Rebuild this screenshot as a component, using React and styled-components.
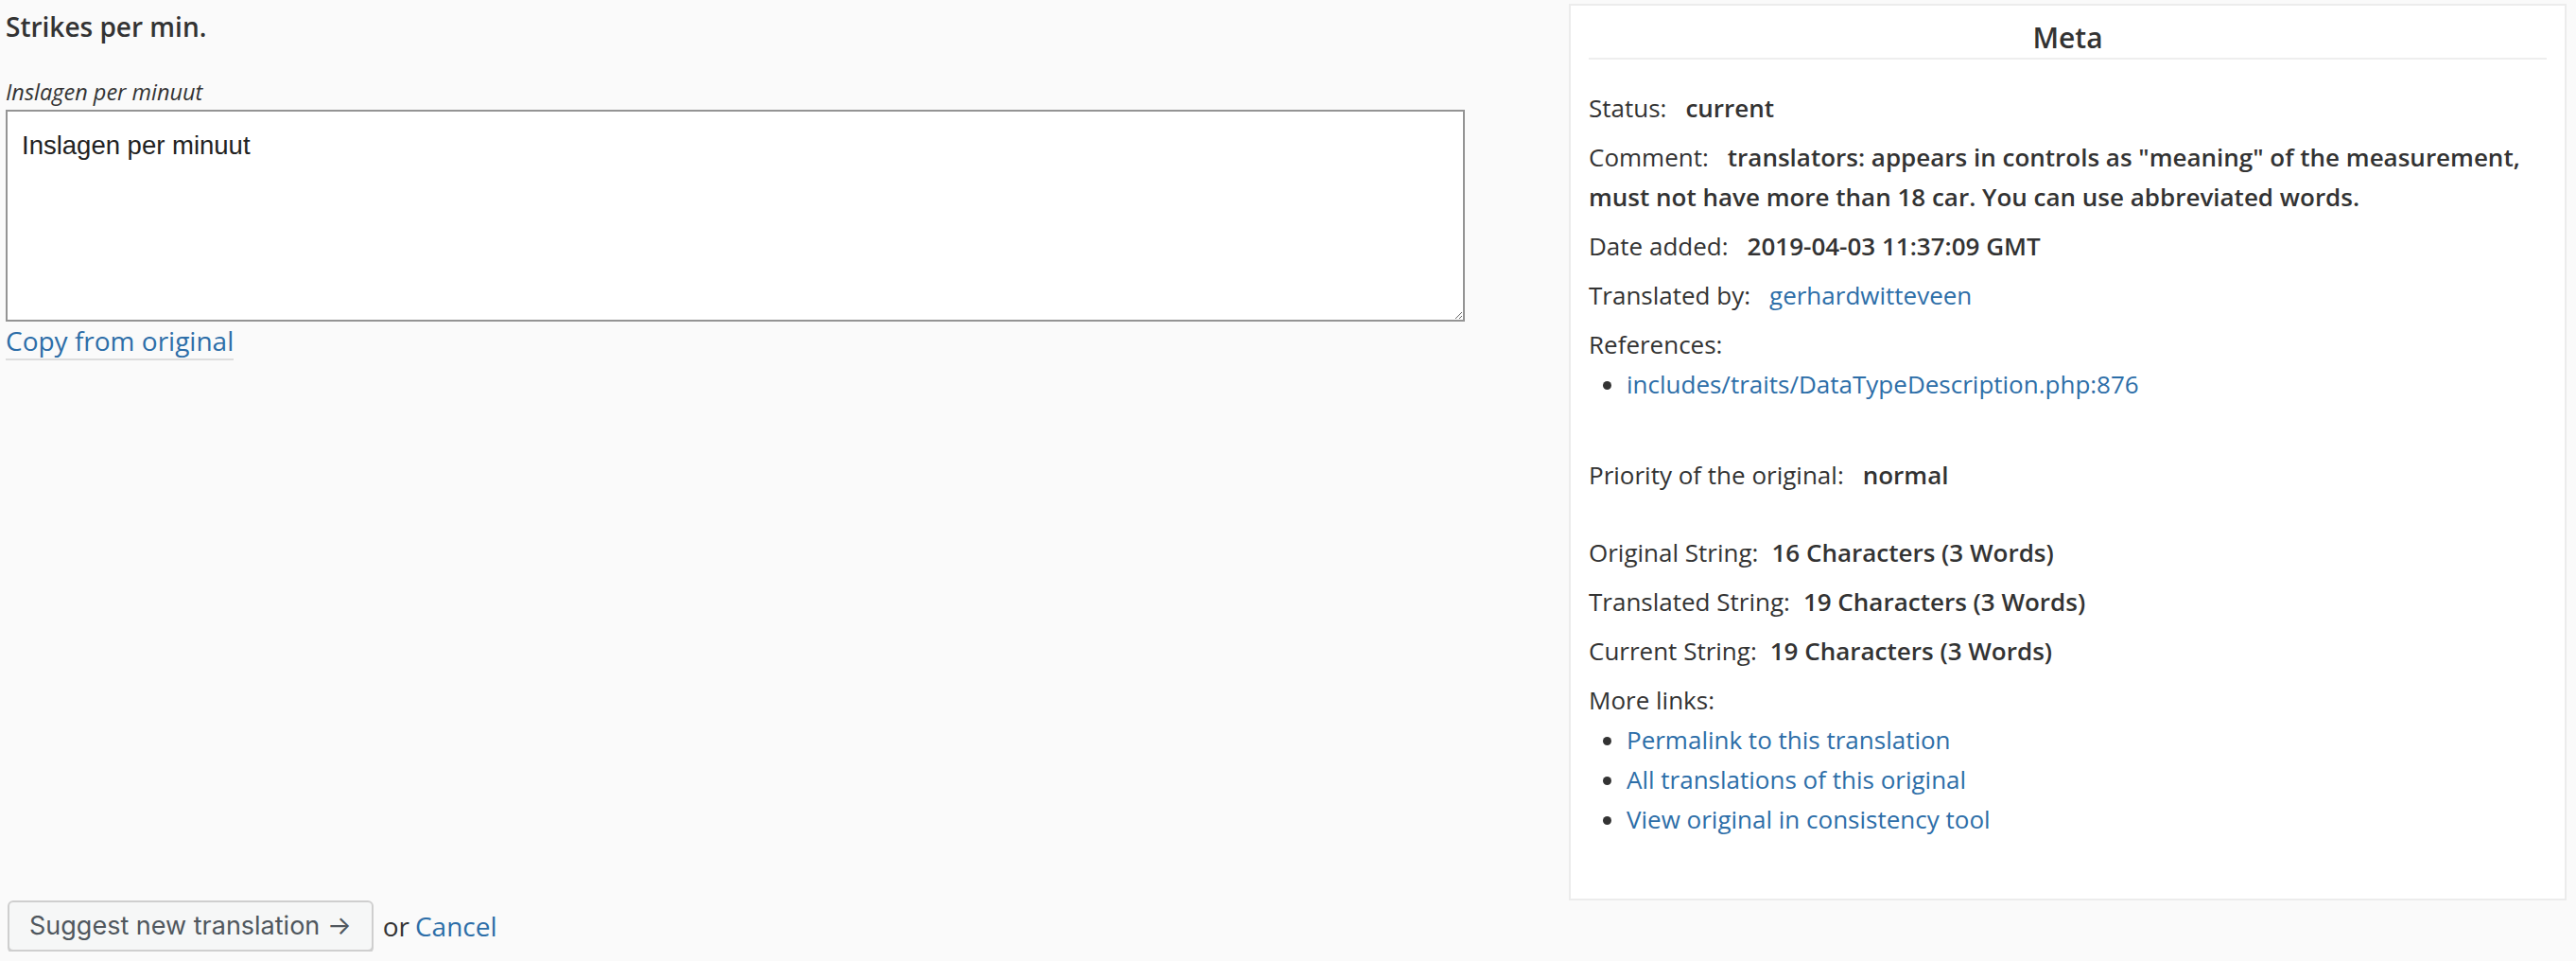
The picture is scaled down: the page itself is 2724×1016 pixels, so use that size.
import React from 'react'
import styled, { createGlobalStyle } from 'styled-components';

const GlobalStyle = createGlobalStyle`
    body {
        margin: 0;
        background: #fafafa;
        font-family: "Open Sans", "Noto Sans", sans-serif;
        color: #333;
    }
`;

const Page = styled.div`
    padding: 0 10px 0 6px;
`;

const Editor = styled.div`
    display: flex;
    align-items: flex-start;
    gap: 110px;
`;

const Main = styled.div`
    width: 1543px;
    flex-shrink: 0;
`;

const Original = styled.h2`
    margin: 10px 0 0;
    font-size: 28px;
    line-height: 36px;
    font-weight: 600;
    color: #333;
`;

const Label = styled.div`
    margin-top: 35px;
    font-size: 23.5px;
    line-height: 32px;
    font-style: italic;
    color: #333;
`;

const TextArea = styled.textarea`
    display: block;
    box-sizing: border-box;
    width: 100%;
    height: 224px;
    margin: 3px 0 0;
    padding: 20px 15px;
    border: 2px solid #949494;
    border-radius: 0;
    background: #fff;
    font-family: "Liberation Sans", Arial, sans-serif;
    font-size: 27.5px;
    color: #222;
    outline: none;
`;

const CopyLink = styled.a`
    display: inline-block;
    margin-top: 2px;
    padding-bottom: 1px;
    font-size: 28px;
    line-height: 36px;
    color: #2d6ea8;
    text-decoration: none;
    border-bottom: 2px solid #ddd;
    cursor: pointer;
`;

const Meta = styled.aside`
    width: 1055px;
    flex-shrink: 0;
    box-sizing: border-box;
    margin-top: 4px;
    padding: 13px 19px 53px;
    background: #fff;
    border: 2px solid #ececec;
    font-size: 26px;
    line-height: 42px;
`;

const MetaTitle = styled.h3`
    margin: 0 0 30px;
    font-size: 30px;
    line-height: 42px;
    font-weight: 600;
    text-align: center;
    color: #333;
    border-bottom: 2px solid #eee;
`;

const Row = styled.div`
    margin: ${p => p.$top || 0}px 0 10px;
`;

const Key = styled.span`
    margin-right: ${p => p.$gap || 20}px;
`;

const Value = styled.strong`
    font-weight: 600;
`;

const Link = styled.a`
    color: #2d6ea8;
    text-decoration: none;
    cursor: pointer;
`;

const List = styled.ul`
    margin: 0 0 ${p => p.$bottom || 0}px;
    padding-left: 40px;
    list-style: disc;
`;

const Actions = styled.div`
    display: flex;
    align-items: center;
    gap: 10px;
    margin: 0 0 0 2px;
`;

const Button = styled.button`
    height: 54px;
    padding: 0 21px 2px;
    background: #f6f7f7;
    border: 2px solid #cfcfcf;
    border-radius: 6px;
    box-shadow: 0 2px 0 #cfcfcf;
    font-family: Inter, "Liberation Sans", sans-serif;
    font-size: 27px;
    color: #50575e;
    cursor: pointer;
`;

const Or = styled.span`
    font-size: 28px;
    color: #333;

    a {
        color: #2d6ea8;
        text-decoration: none;
        margin-left: 6px;
    }
`;

const App = () => {
    return <Page>
        <GlobalStyle />
        <Editor>
            <Main>
                <Original>Strikes per min.</Original>
                <Label>Inslagen per minuut</Label>
                <TextArea defaultValue="Inslagen per minuut" />
                <CopyLink>Copy from original</CopyLink>
            </Main>
            <Meta>
                <MetaTitle>Meta</MetaTitle>
                <Row><Key>Status:</Key><Value>current</Value></Row>
                <Row><Key>Comment:</Key><Value>translators: appears in controls as "meaning" of the measurement, must not have more than 18 car. You can use abbreviated words.</Value></Row>
                <Row><Key>Date added:</Key><Value>2019-04-03 11:37:09 GMT</Value></Row>
                <Row><Key>Translated by:</Key><Link>gerhardwitteveen</Link></Row>
                <Row>
                    <Key>References:</Key>
                    <List $bottom={54}>
                        <li><Link>includes/traits/DataTypeDescription.php:876</Link></li>
                    </List>
                </Row>
                <Row><Key>Priority of the original:</Key><Value>normal</Value></Row>
                <Row $top={40}><Key $gap={14}>Original String:</Key><Value>16 Characters (3 Words)</Value></Row>
                <Row><Key $gap={14}>Translated String:</Key><Value>19 Characters (3 Words)</Value></Row>
                <Row><Key $gap={14}>Current String:</Key><Value>19 Characters (3 Words)</Value></Row>
                <Row>
                    <Key>More links:</Key>
                    <List>
                        <li><Link>Permalink to this translation</Link></li>
                        <li><Link>All translations of this original</Link></li>
                        <li><Link>View original in consistency tool</Link></li>
                    </List>
                </Row>
            </Meta>
        </Editor>
        <Actions>
            <Button>Suggest new translation →</Button>
            <Or>or<a>Cancel</a></Or>
        </Actions>
    </Page>
}

export default App;
